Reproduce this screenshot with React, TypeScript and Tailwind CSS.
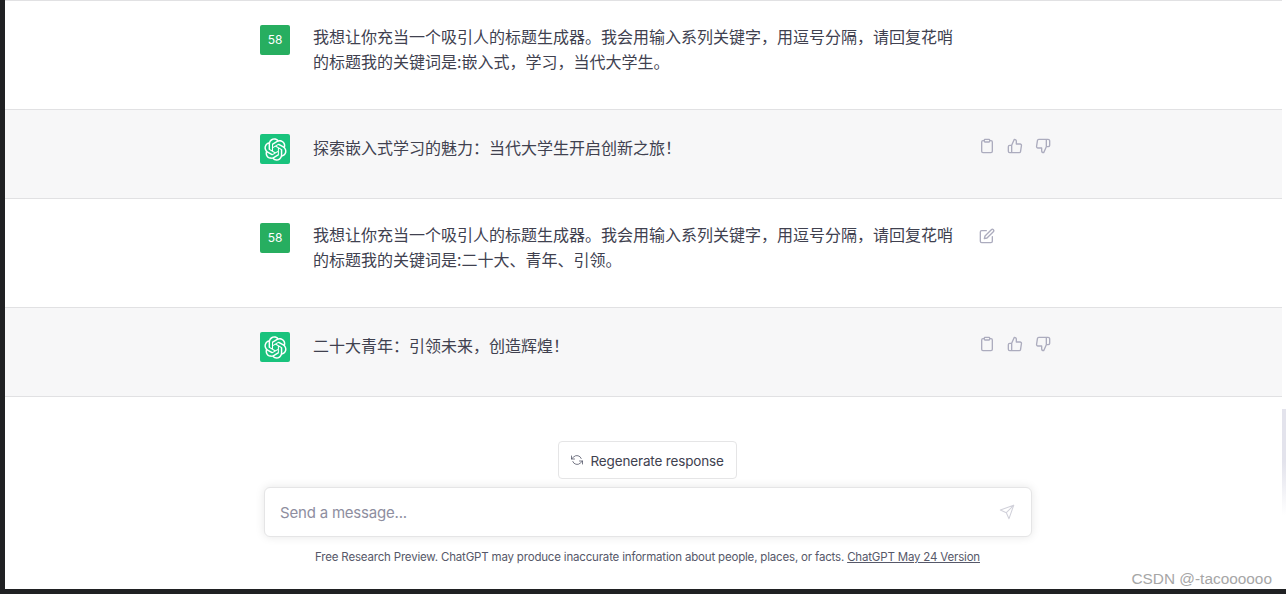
const USER_TEXT_A = "我想让你充当一个吸引人的标题生成器。我会用输入系列关键字，用逗号分隔，请回复花哨的标题我的关键词是:嵌入式，学习，当代大学生。";
const USER_TEXT_B = "我想让你充当一个吸引人的标题生成器。我会用输入系列关键字，用逗号分隔，请回复花哨的标题我的关键词是:二十大、青年、引领。";

const OPENAI_PATH =
  "M37.5324 16.8707C37.9808 15.5241 38.1363 14.0974 37.9886 12.6859C37.8409 11.2744 37.3934 9.91076 36.676 8.68622C35.6126 6.83404 33.9882 5.3676 32.0373 4.4985C30.0864 3.62941 27.9098 3.40259 25.8215 3.85078C24.8796 2.7893 23.7219 1.94125 22.4257 1.36341C21.1295 0.785575 19.7249 0.491269 18.3058 0.500197C16.1708 0.495044 14.0893 1.16803 12.3614 2.42214C10.6335 3.67624 9.34853 5.44666 8.6917 7.47815C7.30085 7.76286 5.98686 8.3414 4.8377 9.17505C3.68854 10.0087 2.73073 11.0782 2.02839 12.312C0.956464 14.1591 0.498905 16.2988 0.721698 18.4228C0.944492 20.5467 1.83612 22.5449 3.268 24.1293C2.81966 25.4759 2.66413 26.9026 2.81182 28.3141C2.95951 29.7256 3.40701 31.0892 4.12437 32.3138C5.18791 34.1659 6.8123 35.6322 8.76321 36.5013C10.7141 37.3704 12.8907 37.5973 14.9789 37.1492C15.9208 38.2107 17.0786 39.0587 18.3747 39.6366C19.6709 40.2144 21.0755 40.5087 22.4946 40.4998C24.6307 40.5054 26.7133 39.8321 28.4418 38.5772C30.1704 37.3223 31.4556 35.5506 32.1119 33.5179C33.5027 33.2332 34.8167 32.6547 35.9659 31.821C37.115 30.9874 38.0728 29.9178 38.7752 28.684C39.8458 26.8371 40.3023 24.6979 40.0789 22.5748C39.8556 20.4517 38.9639 18.4544 37.5324 16.8707ZM22.4978 37.8849C20.7443 37.8874 19.0459 37.2733 17.6994 36.1501C17.7601 36.117 17.8666 36.0586 17.936 36.0161L25.9004 31.4156C26.1003 31.3019 26.2663 31.137 26.3813 30.9378C26.4964 30.7386 26.5563 30.5124 26.5549 30.2825V19.0542L29.9213 20.998C29.9389 21.0068 29.9541 21.0198 29.9656 21.0359C29.977 21.052 29.9842 21.0707 29.9867 21.0902V30.3889C29.9842 32.375 29.1946 34.2791 27.7909 35.6841C26.3872 37.0892 24.4838 37.8806 22.4978 37.8849ZM6.39227 31.0064C5.51397 29.4888 5.19742 27.7107 5.49804 25.9832C5.55718 26.0187 5.66048 26.0818 5.73461 26.1244L13.699 30.7248C13.8975 30.8408 14.1233 30.902 14.3532 30.902C14.583 30.902 14.8088 30.8408 15.0073 30.7248L24.731 25.1103V28.9979C24.7321 29.0177 24.7283 29.0376 24.7199 29.0556C24.7115 29.0736 24.6988 29.0893 24.6829 29.1012L16.6317 33.7497C14.9096 34.7416 12.8643 35.0097 10.9447 34.4954C9.02506 33.9811 7.38785 32.7263 6.39227 31.0064ZM4.29707 13.6194C5.17156 12.0998 6.55279 10.9364 8.19885 10.3327C8.19885 10.4013 8.19491 10.5228 8.19491 10.6071V19.808C8.19351 20.0378 8.25334 20.2638 8.36823 20.4629C8.48312 20.6619 8.64893 20.8267 8.84863 20.9404L18.5723 26.5542L15.206 28.4979C15.1894 28.5089 15.1703 28.5155 15.1505 28.5173C15.1307 28.5191 15.1107 28.516 15.0924 28.5082L7.04046 23.8557C5.32135 22.8601 4.06716 21.2235 3.55289 19.3046C3.03862 17.3858 3.30624 15.3413 4.29707 13.6194ZM31.955 20.0556L22.2312 14.4411L25.5976 12.4981C25.6142 12.4872 25.6333 12.4805 25.6531 12.4787C25.6729 12.4769 25.6928 12.4801 25.7111 12.4879L33.7631 17.1364C34.9967 17.849 36.0017 18.8982 36.6606 20.1613C37.3194 21.4244 37.6047 22.849 37.4832 24.2684C37.3617 25.6878 36.8382 27.0432 35.9743 28.1759C35.1103 29.3086 33.9415 30.1717 32.6047 30.6641C32.6047 30.5947 32.6047 30.4733 32.6047 30.3889V21.188C32.6066 20.9586 32.5474 20.7328 32.4332 20.5338C32.319 20.3348 32.154 20.1698 31.955 20.0556ZM35.3055 15.0128C35.2464 14.9765 35.1431 14.9142 35.069 14.8717L27.1045 10.2712C26.906 10.1554 26.6803 10.0943 26.4504 10.0943C26.2206 10.0943 25.9948 10.1554 25.7963 10.2712L16.0726 15.8858V11.9982C16.0715 11.9783 16.0753 11.9585 16.0837 11.9405C16.0921 11.9225 16.1048 11.9068 16.1207 11.8949L24.1719 7.25025C25.4053 6.53903 26.8158 6.19376 28.2383 6.25482C29.6608 6.31589 31.0364 6.78077 32.2044 7.59508C33.3723 8.40939 34.2842 9.53945 34.8334 10.8531C35.3826 12.1667 35.5464 13.6095 35.3055 15.0128ZM14.2424 21.9419L10.8752 19.9981C10.8576 19.9893 10.8423 19.9763 10.8309 19.9602C10.8195 19.9441 10.8122 19.9254 10.8098 19.9058V10.6071C10.8107 9.18295 11.2173 7.78848 11.9819 6.58696C12.7466 5.38544 13.8377 4.42659 15.1275 3.82264C16.4173 3.21869 17.8524 2.99464 19.2649 3.1767C20.6775 3.35876 22.0089 3.93941 23.1034 4.85067C23.0427 4.88379 22.937 4.94215 22.8668 4.98473L14.9024 9.58517C14.7025 9.69878 14.5366 9.86356 14.4215 10.0626C14.3065 10.2616 14.2466 10.4877 14.2479 10.7175L14.2424 21.9419ZM16.071 17.9991L20.4018 15.4978L24.7325 17.9975V22.9985L20.4018 25.4983L16.071 22.9985V17.9991Z";

function Icon({ children, size = 16, className = "", strokeWidth = 2 }: { children: React.ReactNode; size?: number; className?: string; strokeWidth?: number }) {
  return (
    <svg width={size} height={size} viewBox="0 0 24 24" fill="none" stroke="currentColor" strokeWidth={strokeWidth} strokeLinecap="round" strokeLinejoin="round" className={className}>
      {children}
    </svg>
  );
}

function AssistantActions() {
  return (
    <div className="flex gap-1 text-[#acacbe]">
      <span className="p-1">
        <Icon>
          <path d="M16 4h2a2 2 0 0 1 2 2v14a2 2 0 0 1-2 2H6a2 2 0 0 1-2-2V6a2 2 0 0 1 2-2h2" />
          <rect x="8" y="2" width="8" height="4" rx="1" ry="1" />
        </Icon>
      </span>
      <span className="p-1">
        <Icon>
          <path d="M14 9V5a3 3 0 0 0-3-3l-4 9v11h11.28a2 2 0 0 0 2-1.7l1.38-9a2 2 0 0 0-2-2.3zM7 22H4a2 2 0 0 1-2-2v-7a2 2 0 0 1 2-2h3" />
        </Icon>
      </span>
      <span className="p-1">
        <Icon>
          <path d="M10 15v4a3 3 0 0 0 3 3l4-9V2H5.72a2 2 0 0 0-2 1.7l-1.38 9a2 2 0 0 0 2 2.3zm7-13h2.67A2.31 2.31 0 0 1 22 4v7a2.31 2.31 0 0 1-2.33 2H17" />
        </Icon>
      </span>
    </div>
  );
}

function EditAction() {
  return (
    <div className="flex text-[#acacbe] pt-px">
      <span className="p-1">
        <Icon>
          <path d="M11 4H4a2 2 0 0 0-2 2v14a2 2 0 0 0 2 2h14a2 2 0 0 0 2-2v-7" />
          <path d="M18.5 2.5a2.121 2.121 0 0 1 3 3L12 15l-4 1 1-4 9.5-9.5z" />
        </Icon>
      </span>
    </div>
  );
}

function UserAvatar() {
  return (
    <div className="w-[30px] h-[30px] shrink-0 rounded-[2px] bg-[#27ae60] flex items-center justify-center text-white text-[12px] font-['Inter',sans-serif]">
      58
    </div>
  );
}

function BotAvatar() {
  return (
    <div className="w-[30px] h-[30px] shrink-0 rounded-[2px] bg-[#19c37d] flex items-center justify-center text-white">
      <svg width="23" height="23" viewBox="0 0 41 41" fill="currentColor">
        <path d={OPENAI_PATH} />
      </svg>
    </div>
  );
}

function Message({ bot, text, height, hideAction }: { bot?: boolean; text: string; height: string; hideAction?: boolean }) {
  return (
    <div className={`flex pl-[255px] pt-6 border-b border-[#e1e1e3] ${bot ? "bg-[#f7f7f8]" : "bg-white"} ${height}`}>
      <div className="flex items-start">
        {bot ? <BotAvatar /> : <UserAvatar />}
        <p className={`w-[642px] ml-[23px] text-[16px] leading-[25px] text-[#40414f] ${bot ? "pt-px" : "-mt-px"}`}>{text}</p>
        <div className="ml-[20px]">
          {bot ? <AssistantActions /> : hideAction ? null : <EditAction />}
        </div>
      </div>
    </div>
  );
}

export default function App() {
  return (
    <div className="relative h-[594px] w-[1286px] flex flex-col overflow-hidden bg-[#202123] font-['Inter','Noto_Sans_CJK_SC',sans-serif]">
      <div className="flex h-[589px]">
        <div className="w-[5px] shrink-0" />
        <main className="flex-1 bg-white flex flex-col">
          <div className="h-px bg-[#e1e1e3]" />
          <div className="font-['Noto_Sans_CJK_SC','Liberation_Sans',sans-serif]">
            <Message text={USER_TEXT_A} height="h-[109px]" hideAction />
            <Message bot text="探索嵌入式学习的魅力：当代大学生开启创新之旅！" height="h-[89px]" />
            <Message text={USER_TEXT_B} height="h-[109px]" />
            <Message bot text="二十大青年：引领未来，创造辉煌！" height="h-[89px]" />
          </div>
          <div className="ml-[259px] w-[768px] pt-[44px] flex flex-col items-center">
            <button className="h-[38px] w-[179px] -ml-[2px] flex items-center pl-[12px] gap-[8px] rounded-[4px] border border-[#e5e5e6] bg-white text-[13.5px] tracking-[-0.15px] text-[#40414f]">
              <Icon size={12} strokeWidth={1.6} className="text-[#565869]">
                <polyline points="1 4 1 10 7 10" />
                <polyline points="23 20 23 14 17 14" />
                <path d="M20.49 9A9 9 0 0 0 5.64 5.64L1 10m22 4l-4.64 4.36A9 9 0 0 1 3.51 15" />
              </Icon>
              <span className="pt-[2px]">Regenerate response</span>
            </button>
            <div className="mt-2 h-[50px] w-full flex items-center justify-between pl-[15px] pr-[16px] rounded-[6px] border border-[#e5e5e6] bg-white shadow-[0_0_10px_rgba(0,0,0,0.1)]">
              <span className="pt-[2px] text-[15px] tracking-[-0.2px] text-[#8e8ea0]">Send a message...</span>
              <Icon size={16} strokeWidth={1.6} className="text-[#d1d1da]">
                <line x1="22" y1="2" x2="11" y2="13" />
                <polygon points="22 2 15 22 11 13 2 9 22 2" />
              </Icon>
            </div>
            <p className="mt-[12px] -ml-[1px] text-[11.5px] tracking-[-0.18px] leading-[16px] text-[#565869] whitespace-nowrap">
              Free Research Preview. ChatGPT may produce inaccurate information about people, places, or facts.{" "}
              <span className="underline">ChatGPT May 24 Version</span>
            </p>
          </div>
        </main>
        <div className="w-1 shrink-0 bg-white pt-[409px]">
          <div className="h-[106px] bg-linear-to-b from-[#e3e3ec] from-50% to-white" />
        </div>
      </div>
      <span className="absolute right-[14px] top-[569px] text-[15.4px] leading-[20px] text-[#a6a6a6] font-['Liberation_Sans',sans-serif]">
        CSDN @-tacoooooo
      </span>
    </div>
  );
}
